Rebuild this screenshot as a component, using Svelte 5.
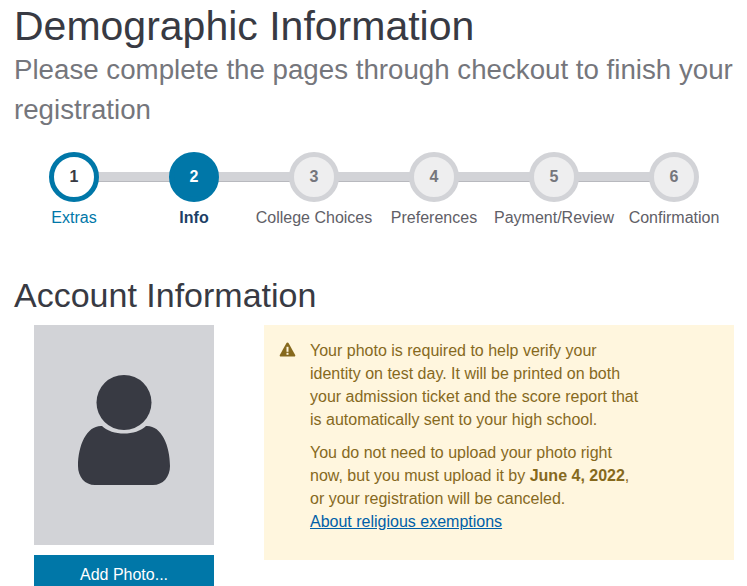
<script>
  const steps = ["Extras", "Info", "College Choices", "Preferences", "Payment/Review", "Confirmation"];
  const current = 1;
</script>

<main>
  <h1>Demographic Information</h1>
  <p class="sub">Please complete the pages through checkout to finish your registration</p>

  <ol class="steps">
    {#each steps as label, i}
      <li class:done={i < current} class:active={i == current}>
        <span class="num">{i + 1}</span>
        <span class="label">{label}</span>
      </li>
    {/each}
  </ol>

  <h2>Account Information</h2>

  <div class="account">
    <div class="photo-col">
      <div class="photo">
        <svg width="92" height="110" viewBox="0 0 92 110">
          <circle cx="46" cy="27.5" r="27.5" fill="#383a43" />
          <path d="M24 51 C34 61 58 61 68 51 C83 50 92 70 92 91 C92 102 85 110 75 110 L17 110 C7 110 0 102 0 91 C0 70 9 50 24 51 Z" fill="#383a43" />
        </svg>
      </div>
      <button>Add Photo...</button>
    </div>

    <div class="alert">
      <svg class="warn" width="17" height="15" viewBox="0 0 16 15">
        <path d="M8 0.5 C8.5 0.5 8.8 0.8 9 1.1 L15.7 13 C16.1 13.8 15.6 14.6 14.8 14.6 L1.2 14.6 C0.4 14.6 -0.1 13.8 0.3 13 L7 1.1 C7.2 0.8 7.5 0.5 8 0.5 Z" fill="#86691d" />
        <rect x="7" y="4.8" width="2" height="5" fill="#fff6de" />
        <rect x="7" y="10.8" width="2" height="2" fill="#fff6de" />
      </svg>
      <div class="msg">
        <p>Your photo is required to help verify your identity on test day. It will be printed on both your admission ticket and the score report that is automatically sent to your high school.</p>
        <p>You do not need to upload your photo right now, but you must upload it by <b>June 4, 2022</b>, or your registration will be canceled.<br /><a href="#exemptions">About religious exemptions</a></p>
      </div>
    </div>
  </div>
</main>

<style>
  :global(body) {
    margin: 0;
    background: #fff;
  }

  main {
    font-family: "Liberation Sans", Arial, sans-serif;
    padding: 0 13px 0 14px;
    height: 586px;
    overflow: hidden;
    box-sizing: border-box;
    color: #383a43;
  }

  h1 {
    font-size: 41px;
    font-weight: 400;
    line-height: 48px;
    margin: 2px 0 0;
  }

  .sub {
    font-size: 27.7px;
    line-height: 40px;
    color: #75767c;
    margin: 0;
  }

  .steps {
    list-style: none;
    display: flex;
    margin: 22px 0 0;
    padding: 0;
  }

  .steps li {
    width: 120px;
    display: flex;
    flex-direction: column;
    align-items: center;
    position: relative;
  }

  .steps li:not(:last-child)::after {
    content: "";
    position: absolute;
    left: 60px;
    top: 20px;
    width: 120px;
    height: 10px;
    background: #d2d3d7;
    border-bottom: 1px solid #b8b9be;
    box-sizing: border-box;
  }

  .num {
    width: 50px;
    height: 50px;
    box-sizing: border-box;
    border: 5px solid #d2d3d7;
    border-radius: 50%;
    background: #eeeeef;
    color: #75767c;
    font-weight: 700;
    font-size: 16px;
    display: flex;
    align-items: center;
    justify-content: center;
    position: relative;
    z-index: 1;
  }

  .label {
    font-size: 16px;
    line-height: 20px;
    margin-top: 6px;
    color: #5f6067;
    white-space: nowrap;
  }

  .done .num {
    border-color: #0077a8;
    background: #fff;
    color: #383a43;
  }

  .done .label {
    color: #0077a8;
  }

  .active .num {
    border-color: #0077a8;
    background: #0077a8;
    color: #fff;
  }

  .active .label {
    color: #1d3f66;
    font-weight: 700;
  }

  h2 {
    font-size: 34px;
    font-weight: 400;
    line-height: 40px;
    margin: 47px 0 0;
  }

  .account {
    display: flex;
    margin-top: 10px;
    align-items: flex-start;
  }

  .photo-col {
    width: 180px;
    margin-left: 20px;
    flex: none;
  }

  .photo {
    height: 220px;
    box-sizing: border-box;
    padding-bottom: 10px;
    background: #d2d3d7;
    display: flex;
    align-items: center;
    justify-content: center;
  }

  button {
    display: block;
    width: 100%;
    height: 40px;
    margin-top: 10px;
    border: 0;
    background: #0077a8;
    color: #fff;
    font: 16px "Liberation Sans", Arial, sans-serif;
  }

  .alert {
    margin-left: 50px;
    width: 470px;
    height: 235px;
    box-sizing: border-box;
    padding: 14px 16px 0;
    background: #fff6de;
    color: #86691d;
    display: flex;
    font-size: 16px;
    line-height: 23px;
  }

  .warn {
    flex: none;
    margin-top: 3px;
    margin-left: -1px;
  }

  .msg {
    margin-left: 14px;
    width: 335px;
  }

  .msg p {
    margin: 0 0 10px;
  }

  a {
    color: #0060a8;
  }
</style>
